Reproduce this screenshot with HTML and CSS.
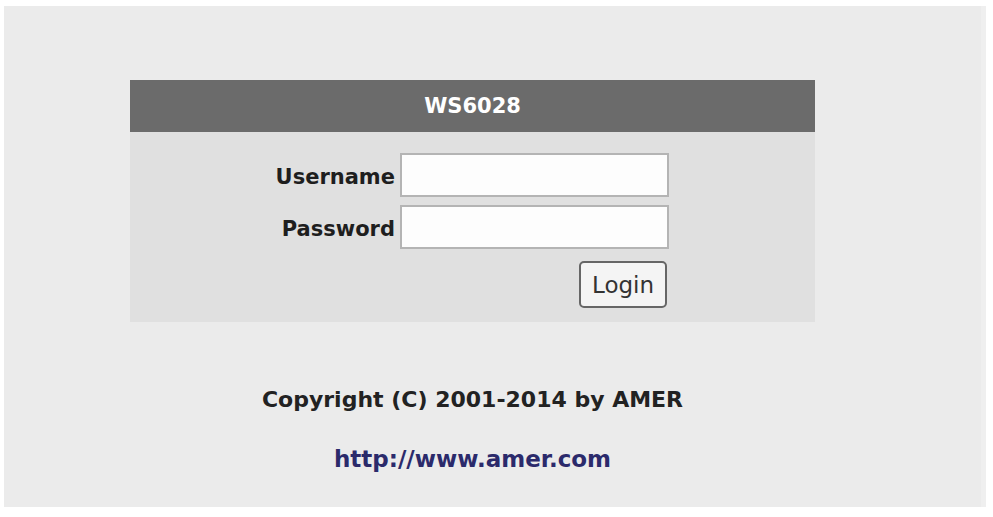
FILE: index.html
```html
<!DOCTYPE html>
<html>
<head>
<meta charset="utf-8">
<link rel="stylesheet" href="styles.css">
</head>
<body>
<div class="page">
  <div class="content">
    <div class="panel">
      <div class="panel-head">WS6028</div>
      <form class="panel-body">
        <div class="row">
          <label class="lbl" for="u">Username</label>
          <input class="field" id="u" type="text">
        </div>
        <div class="row">
          <label class="lbl" for="p">Password</label>
          <input class="field" id="p" type="password">
        </div>
        <div class="row btn-row">
          <button type="button" class="btn">Login</button>
        </div>
      </form>
    </div>
    <p class="copy">Copyright (C) 2001-2014 by AMER</p>
    <p class="link"><a href="#">http://www.amer.com</a></p>
  </div>
</div>
</body>
</html>
```
FILE: styles.css
```css
html, body {
  margin: 0;
  padding: 0;
  background: #ffffff;
}
body {
  padding: 6px 7px 10px 4px;
  font-family: "DejaVu Sans", Verdana, sans-serif;
}
.page {
  background: #ebebeb;
  height: 501px;
  box-sizing: border-box;
  padding-top: 74px;
  border-right: 5px solid #efefef;
}
.content {
  width: 685px;
  margin-left: 126px;
}
.panel {
  background: #e0e0e0;
}
.panel-head {
  background: #6b6b6b;
  color: #ffffff;
  height: 52px;
  display: flex;
  align-items: center;
  justify-content: center;
  font-weight: bold;
  font-size: 21px;
}
.panel-body {
  margin: 0;
  padding: 21px 0 14px 0;
  display: flex;
  flex-direction: column;
  gap: 8px;
}
.row {
  display: flex;
  align-items: center;
}
.lbl {
  width: 265px;
  text-align: right;
  padding-right: 5px;
  padding-top: 4px;
  font-weight: bold;
  font-size: 21px;
  color: #1e1e1e;
}
.field {
  width: 269px;
  height: 44px;
  box-sizing: border-box;
  border: 2px solid #b4b4b4;
  background: #fdfdfd;
  margin: 0;
}
.btn-row {
  margin-top: 4px;
  padding-left: 449px;
}
.btn {
  width: 88px;
  height: 47px;
  background: #f4f4f4;
  border: 2px solid #666666;
  border-radius: 5px;
  font-family: "DejaVu Sans", Verdana, sans-serif;
  font-size: 23px;
  color: #333333;
  padding: 0;
}
.copy {
  margin: 65px 0 0 0;
  text-align: center;
  font-weight: bold;
  font-size: 22px;
  color: #222222;
}
.link {
  margin: 34px 0 0 0;
  text-align: center;
  font-weight: bold;
  font-size: 23px;
}
.link a {
  color: #2b2a6b;
  text-decoration: none;
}
```
